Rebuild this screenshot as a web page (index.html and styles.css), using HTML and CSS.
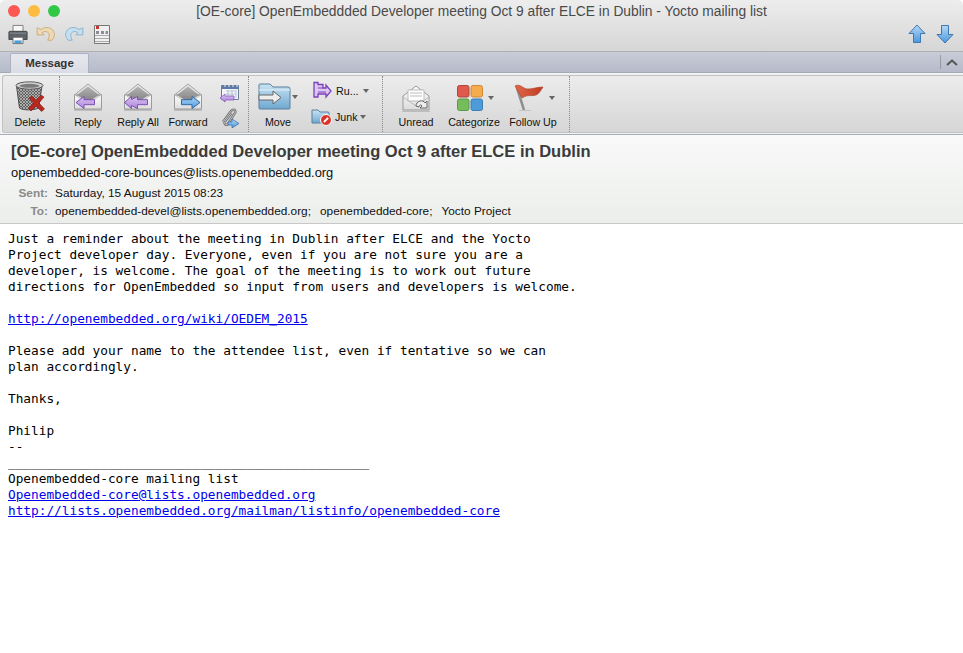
FILE: index.html
```html
<!DOCTYPE html>
<html lang="en">
<head>
<meta charset="utf-8">
<title>[OE-core] OpenEmbeddded Developer meeting</title>
<link rel="stylesheet" href="styles.css">
</head>
<body>
<svg class="defs" width="0" height="0" aria-hidden="true">
  <defs>
    <linearGradient id="blueFill" x1="0" y1="0" x2="0" y2="1"><stop offset="0" stop-color="#b5d8f5"/><stop offset="1" stop-color="#4b97e0"/></linearGradient>
    <linearGradient id="purpleFill" x1="0" y1="0" x2="0" y2="1"><stop offset="0" stop-color="#dcc4f2"/><stop offset="1" stop-color="#ad84dc"/></linearGradient>
    <linearGradient id="folderFill" x1="0" y1="0" x2="0" y2="1"><stop offset="0" stop-color="#c9e3f3"/><stop offset="1" stop-color="#6ea8d0"/></linearGradient>
    <linearGradient id="envFill" x1="0" y1="0" x2="0" y2="1"><stop offset="0" stop-color="#fdfdfd"/><stop offset="1" stop-color="#dcdcdc"/></linearGradient>
    <linearGradient id="flapFill" x1="0" y1="0" x2="0" y2="1"><stop offset="0" stop-color="#b4b4b4"/><stop offset="1" stop-color="#7e7e7e"/></linearGradient>
    <linearGradient id="flagFill" x1="0" y1="0" x2="1" y2="0"><stop offset="0" stop-color="#e2664a"/><stop offset="1" stop-color="#bf3d22"/></linearGradient>
    <pattern id="mesh" width="3" height="3" patternUnits="userSpaceOnUse"><rect width="3" height="3" fill="#5e5e5e"/><path d="M0 0 3 3M3 0 0 3" stroke="#c9c9c9" stroke-width=".7"/></pattern>
    <symbol id="envelope" viewBox="0 0 30 28">
      <path d="M1.500 12 15 1l13.500 11z" fill="#e4e4e4" stroke="#a2a2a2"/>
      <path d="M4 12 15 3.500 26 12 15 19z" fill="url(#flapFill)"/>
      <path d="M1.500 12h27v14h-27z" fill="none" stroke="#9a9a9a"/>
      <path d="M2 12l13 8.500L28 12v14H2z" fill="url(#envFill)"/>
      <path d="M2 12l13 8.500L28 12" fill="none" stroke="#c4c4c4"/>
      <path d="M1.500 12v14h27V12" fill="none" stroke="#9a9a9a"/>
      <path d="M1 27.500h28" stroke="#bdbdbd"/>
    </symbol>
  </defs>
</svg>
<div class="window">
  <header class="titlebar">
    <div class="title-row">
      <div class="lights"><span class="light red"></span><span class="light yellow"></span><span class="light green"></span></div>
      <div class="title">[OE-core] OpenEmbeddded Developer meeting Oct 9 after ELCE in Dublin - Yocto mailing list</div>
    </div>
    <div class="quick-row">
      <div class="quick-left">
        <svg width="20" height="21" viewBox="0 0 22 23"><path d="M5.500 1.500h11v7h-11z" fill="#f6f6f6" stroke="#777"/><path d="M2 8h18a1 1 0 0 1 1 1v8H1V9a1 1 0 0 1 1-1z" fill="#5c6268" stroke="#3e4347"/><path d="M2 10h18" stroke="#8c9298"/><path d="M5.500 14.500h11v7h-11z" fill="#fff" stroke="#666"/><path d="M7 18h8v3H7z" fill="#4aa0d8"/></svg>
        <svg width="20" height="16" viewBox="0 0 22 18"><path d="M1 2v8h8L6.500 7.500c2.500-2 6-1.500 7.500.5 1.200 2 .8 4.500-1 8h4.500c3.500-4 3.800-8 1-11.500-3.500-3.500-9-3.800-13-.5z" fill="#efd9b4" stroke="#c9a874"/></svg>
        <svg width="20" height="16" viewBox="0 0 22 18"><path d="M21 2v8h-8l2.500-2.500c-2.500-2-6-1.500-7.500.5-1.200 2-.8 4.500 1 8H4.500C1 12 .7 8 3.500 4.500c3.500-3.500 9-3.800 13-.5z" fill="#c4dff0" stroke="#86b0cc"/></svg>
        <svg class="doc-icon" width="16" height="19" viewBox="0 0 16 19"><path d="M.5.500h15v18H.5z" fill="#f0f0f0" stroke="#777"/><path d="M1 10.500h14M1 13.500h14M1 16.500h14" stroke="#aaa"/><path d="M2 1h3v3H2z" fill="#c33"/><path d="M2 6h3v3H2zM7 6h3v3H7zM11.500 6h2.500v3h-2.500z" fill="#8a8f96"/></svg>
      </div>
      <div class="quick-right">
        <svg width="18" height="20" viewBox="0 0 18 20"><path d="M9 1 17 9.500h-4.500v9h-7v-9H1z" fill="url(#blueFill)" stroke="#3f78ad"/></svg>
        <svg width="18" height="20" viewBox="0 0 18 20"><path d="M9 19 17 10.500h-4.500v-9h-7v9H1z" fill="url(#blueFill)" stroke="#3f78ad"/></svg>
      </div>
    </div>
  </header>

  <nav class="tabbar">
    <div class="tab">Message</div>
    <div class="collapse"><svg width="12" height="7" viewBox="0 0 12 7"><path d="M1 6 6 1.500 11 6" fill="none" stroke="#555" stroke-width="2"/></svg></div>
  </nav>

  <div class="ribbon-wrap">
    <div class="ribbon">
      <div class="group g-delete">
        <div class="btn w-delete">
          <svg class="big i-trash" width="31" height="32" viewBox="0 0 31 32"><path d="M1.500 5l3 22c3 2.500 15 2.500 19 0l3.500-22z" fill="url(#mesh)" stroke="#4e4e4e"/><ellipse cx="14.500" cy="4.500" rx="13.500" ry="3.700" fill="#d2d2d2" stroke="#5c5c5c"/><ellipse cx="14.500" cy="4.800" rx="10" ry="2" fill="#7a7a7a"/><path d="M14 17l3-2 4 4 5-5 3 2-5 6 5.500 6-3 2.500-5.500-5.500-5 5-2.500-3 5-5z" fill="#b5291f" stroke="#7f1a14" stroke-width=".6"/></svg>
          <span class="label">Delete</span>
        </div>
      </div>
      <div class="group g-respond">
        <div class="btn w-mail">
          <svg class="big i-mail" width="30" height="28"><use href="#envelope"/><path d="M3 19.500l8-6v3.200h10.500v5H11v3.800z" fill="url(#purpleFill)" stroke="#7d4fb3"/></svg>
          <span class="label">Reply</span>
        </div>
        <div class="btn w-mail">
          <svg class="big i-mail" width="30" height="28"><use href="#envelope"/><path d="M1.500 19.500l7-6v3l6-3v3.200h10v5h-10v3.800l-6-3v3z" fill="url(#purpleFill)" stroke="#7d4fb3"/></svg>
          <span class="label">Reply All</span>
        </div>
        <div class="btn w-mail">
          <svg class="big i-mail" width="30" height="28"><use href="#envelope"/><path d="M27 19.500l-8-6v3.200H8.500v5H19v3.800z" fill="url(#blueFill)" stroke="#33689f"/></svg>
          <span class="label">Forward</span>
        </div>
        <div class="stack-icons">
          <svg width="20" height="20" viewBox="0 0 20 20"><path d="M1.500 2.500h17v14h-17z" fill="#f2f4f8" stroke="#6a7f9c"/><path d="M2 2.500h16V6H2z" fill="#5b7ba6"/><path d="M5 1v3M9 1v3M13 1v3M17 1v3" stroke="#eee"/><path d="M6 8h10M6 11h10M8 7v8M12 7v8M16 7v8" stroke="#a9b6c8" stroke-width=".7"/><path d="M0 15l5-4v2h9v4H5v2z" fill="url(#purpleFill)" stroke="#7d4fb3" stroke-width=".7"/></svg>
          <svg width="20" height="20" viewBox="0 0 20 20"><path d="M3 14 11 3c2-2.500 5.500-1 4 2L8 16c-1.500 2-4.500 0-3-2.500L11.500 5" fill="none" stroke="#6f6f6f" stroke-width="2.400"/><path d="M3 14 11 3c2-2.500 5.500-1 4 2L8 16c-1.500 2-4.500 0-3-2.500L11.500 5" fill="none" stroke="#d8d8d8" stroke-width=".8"/><path d="M8 14h4v-3l7 4.500-7 4.500v-3H8z" fill="url(#blueFill)" stroke="#33689f" stroke-width=".7"/></svg>
        </div>
      </div>
      <div class="group g-move">
        <div class="btn w-move">
          <div class="icon-caret i-move">
            <svg class="big" width="33" height="27" viewBox="0 0 33 27"><path d="M1 25V2a1 1 0 0 1 1-1h10l3 3h15a2 2 0 0 1 2 2v19a1 1 0 0 1-1 1H2a1 1 0 0 1-1-1z" fill="url(#folderFill)" stroke="#5a7f9c"/><path d="M1 7h31" stroke="#e7f2f8"/><path d="M1 12h14V8l8 6.500-8 6.500v-4H1z" fill="#eee" stroke="#666"/></svg>
            <span class="caret"></span>
          </div>
          <span class="label">Move</span>
        </div>
        <div class="side-col">
          <div class="side-item side-rules">
            <svg width="20" height="20" viewBox="0 0 20 20"><path d="M2 1.500h4v2h5v3.500h3v-3l5 6-5 6v-3H6v3H2z" fill="#dcc8f2" stroke="#7b3fb8" stroke-width="1.300"/><path d="M6 7h5M6 11h8" stroke="#7b3fb8"/></svg>
            <span class="label">Ru...</span><span class="caret"></span>
          </div>
          <div class="side-item side-junk">
            <svg width="22" height="18" viewBox="0 0 22 18"><path d="M1 15V2h6l2 2h8a1 1 0 0 1 1 1v10z" fill="url(#folderFill)" stroke="#5a7f9c"/><circle cx="15" cy="12" r="5.500" fill="#d9342b" stroke="#fff"/><path d="M12 12h6" stroke="#fff" stroke-width="2" transform="rotate(-45 15 12)"/></svg>
            <span class="label">Junk</span><span class="caret"></span>
          </div>
        </div>
      </div>
      <div class="group g-tags">
        <div class="btn w-unread">
          <svg class="big i-unread" width="30" height="29" viewBox="0 0 30 29"><path d="M2 12 15 2l13 10v14H2z" fill="url(#envFill)" stroke="#999"/><path d="M7 6h16v11H7z" fill="#fff" stroke="#bbb"/><path d="M9 9h12M9 12h12" stroke="#bbb"/><path d="M2 13l13 9 13-9" fill="none" stroke="#bbb"/><path d="M15 22c0-5 7-7 9-3l2-2v7h-7l2-2c-1-2-3-1-3 1z" fill="#eee" stroke="#666"/><path d="M1 27.500h28" stroke="#bdbdbd"/></svg>
          <span class="label">Unread</span>
        </div>
        <div class="btn w-cat">
          <div class="icon-caret i-cat">
            <svg class="big" width="26" height="26" viewBox="0 0 26 26"><rect x=".5" y=".5" width="11.500" height="11.500" rx="2" fill="#dd5a4c" stroke="#b34438"/><rect x="14" y=".5" width="11.500" height="11.500" rx="2" fill="#f5ab4e" stroke="#cf8a35"/><rect x=".5" y="14" width="11.500" height="11.500" rx="2" fill="#76bb5c" stroke="#5b9a44"/><rect x="14" y="14" width="11.500" height="11.500" rx="2" fill="#4d9bd8" stroke="#3a7eb5"/></svg>
            <span class="caret"></span>
          </div>
          <span class="label">Categorize</span>
        </div>
        <div class="btn w-flag">
          <div class="icon-caret i-flag">
            <svg class="big" width="30" height="29" viewBox="0 0 30 29"><path d="M3 5l7 22" stroke="#8f8f8f" stroke-width="2.500"/><path d="M5 27.500h12" stroke="#c2c2c2"/><path d="M1 3c5-3 8 3 13 3s9-2 15-2c-2 3-4 7-7 8-4 1.500-8-1-14 3z" fill="url(#flagFill)" stroke="#ab3620" stroke-width=".6"/></svg>
            <span class="caret"></span>
          </div>
          <span class="label">Follow Up</span>
        </div>
      </div>
    </div>
  </div>

  <section class="msg-head">
    <h1 class="subject">[OE-core] OpenEmbeddded Developer meeting Oct 9 after ELCE in Dublin</h1>
    <div class="from">openembedded-core-bounces@lists.openembedded.org</div>
    <dl class="meta">
      <dt>Sent:</dt><dd>Saturday, 15 August 2015 08:23</dd>
      <dt>To:</dt><dd class="to"><span>openembedded-devel@lists.openembedded.org;</span><span>openembedded-core;</span><span>Yocto Project</span></dd>
    </dl>
  </section>

  <main class="body">Just a reminder about the meeting in Dublin after ELCE and the Yocto
Project developer day. Everyone, even if you are not sure you are a
developer, is welcome. The goal of the meeting is to work out future
directions for OpenEmbedded so input from users and developers is welcome.

<a href="#">http://openembedded.org/wiki/OEDEM_2015</a>

Please add your name to the attendee list, even if tentative so we can
plan accordingly.

Thanks,

Philip
--
_______________________________________________
Openembedded-core mailing list
<a href="#">Openembedded-core@lists.openembedded.org</a>
<a href="#">http://lists.openembedded.org/mailman/listinfo/openembedded-core</a></main>
</div>
</body>
</html>
```
FILE: styles.css
```css
* { box-sizing: border-box; }
html, body { margin: 0; padding: 0; background: #fff; }
body { font-family: "Liberation Sans", Arial, sans-serif; color: #111; overflow: hidden; }
.defs { position: absolute; }
.window { width: 963px; height: 653px; display: flex; flex-direction: column; background: #fff; }

.titlebar { height: 52px; background: linear-gradient(#ededed, #d6d6d6); border-bottom: 1px solid #b0b0b0; border-radius: 5px 5px 0 0; }
.title-row { height: 22px; position: relative; display: flex; align-items: center; justify-content: center; }
.lights { position: absolute; left: 8px; top: 5px; display: flex; gap: 8px; }
.light { width: 12px; height: 12px; border-radius: 50%; }
.red { background: #fc5753; }
.yellow { background: #fdbc40; }
.green { background: #33c748; }
.title { font-size: 13.8px; color: #4a4a4a; }
.quick-row { height: 29px; display: flex; justify-content: space-between; align-items: flex-start; padding: 0 9px 0 8px; }
.quick-left { display: flex; align-items: center; gap: 8px; height: 24px; }
.doc-icon { margin-left: 2px; }
.quick-right { display: flex; gap: 10px; padding-top: 2px; }

.tabbar { height: 21px; background: linear-gradient(#c8ccd8, #b6bbca); border-bottom: 1px solid #a6abb8; display: flex; justify-content: space-between; padding-left: 10px; }
.tab { width: 79px; height: 21px; margin-top: 1px; padding-top: 3px; text-align: center; font-size: 11.5px; font-weight: bold; color: #333; background: linear-gradient(#e6e8ee, #d9dce5); border: 1px solid #aeb2c0; border-bottom: none; border-radius: 2px 2px 0 0; }
.collapse { width: 23px; margin: 3px 0; padding-left: 5px; border-left: 1px solid #989aa2; display: flex; align-items: center; }

.ribbon-wrap { height: 62px; padding: 2px 0 1px 2px; background: #eff1f3; border-bottom: 1px solid #a9adb6; }
.ribbon { height: 100%; display: flex; background: linear-gradient(#ececec, #d6d6d6); border: 1px solid #c2c2c2; border-right: none; border-radius: 3px 0 0 3px; }
.group { display: flex; height: 100%; border-right: 1px dotted #888; padding-top: 2px; }
.g-delete { width: 57px; }
.g-respond { width: 189px; padding-left: 3px; }
.g-move { width: 134px; }
.g-tags { width: 187px; padding-left: 5px; }
.btn { display: flex; flex-direction: column; align-items: center; justify-content: space-between; height: 53px; padding-bottom: 2px; }
.w-delete { width: 54px; }
.w-mail { width: 50px; }
.w-move { width: 58px; }
.w-unread { width: 56px; }
.w-cat { width: 60px; }
.w-flag { width: 58px; }
.big { display: block; }
.i-trash { margin-top: 3px; }
.i-mail { margin-top: 5px; }
.i-unread { margin-top: 6px; }
.label { font-size: 10.7px; color: #111; white-space: nowrap; line-height: 13px; }
.stack-icons { display: flex; flex-direction: column; justify-content: space-between; align-items: center; width: 34px; height: 50px; padding-top: 5px; }
.icon-caret { display: flex; align-items: center; }
.i-move { gap: 1px; margin-top: 5px; }
.i-cat { gap: 5px; margin-top: 7px; margin-left: 2px; }
.i-flag { gap: 5px; margin-top: 5px; margin-left: 2px; }
.caret { width: 0; height: 0; border-left: 3.500px solid transparent; border-right: 3.500px solid transparent; border-top: 4px solid #666; }
.side-col { display: flex; flex-direction: column; gap: 4px; padding-top: 2px; margin-left: 4px; }
.side-item { display: flex; align-items: center; height: 22px; }
.side-rules { gap: 4px; padding-left: 1px; }
.side-junk { gap: 2px; }

.msg-head { height: 89px; background: linear-gradient(#f8f9f8, #eceeec); border-bottom: 1px solid #c8c8c8; padding: 7px 0 0 11px; }
.subject { margin: 0; font-size: 16.54px; line-height: 20px; font-weight: bold; color: #3b3b3b; }
.from { font-size: 12.88px; line-height: 15px; margin-top: 3px; color: #111; }
.meta { margin: 6px 0 0 0; display: grid; grid-template-columns: 37px auto; column-gap: 7px; row-gap: 3px; font-size: 11.83px; line-height: 15px; }
.meta dt { font-weight: bold; color: #8a8a8a; text-align: right; font-size: 11.8px; }
.meta dd { margin: 0; color: #111; }
.to { display: flex; gap: 9px; }

.body { flex: 1; margin: 0; padding: 7px 0 0 8px; font-family: "DejaVu Sans Mono", monospace; font-size: 12.785px; line-height: 16px; white-space: pre; color: #000; }
.body a { color: #0000ee; }
```
